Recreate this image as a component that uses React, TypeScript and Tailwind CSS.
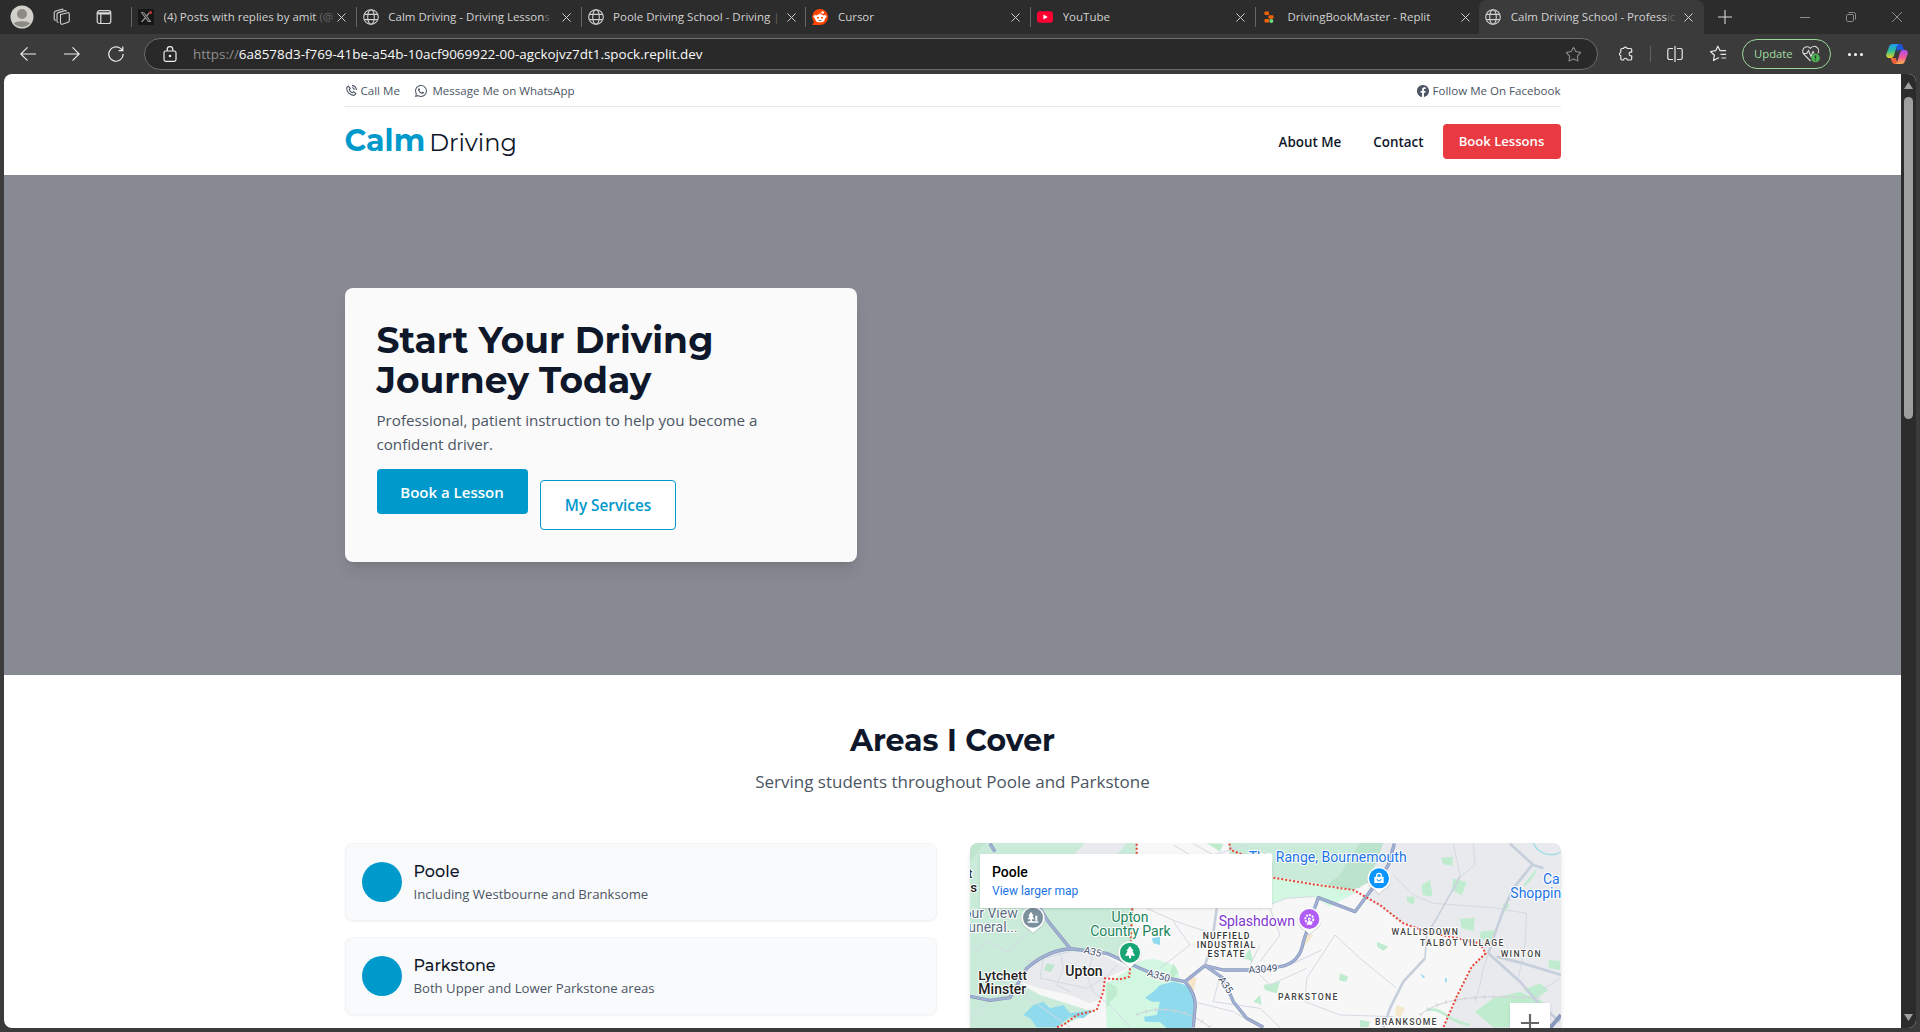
import type { ReactNode } from 'react';
import { BiPhoneCall } from 'react-icons/bi';
import { BsWhatsapp, BsFacebook } from 'react-icons/bs';
import { FaXTwitter } from 'react-icons/fa6';
import { Star } from 'lucide-react';

const Globe = () => (
  <svg viewBox="0 0 16 16" className="size-4" fill="none" stroke="#d0d0d0" strokeWidth="1.1">
    <circle cx="8" cy="8" r="7.3" />
    <ellipse cx="8" cy="8" rx="3.3" ry="7.3" />
    <path d="M1.4 5.4h13.2M1.4 10.6h13.2" />
  </svg>
);

const XFavicon = () => (
  <span className="relative flex size-4 items-center justify-center bg-[#171717]">
    <FaXTwitter className="size-3 text-[#9a9a9a]" />
    <span className="absolute top-0.5 right-0.5 size-[3px] rounded-full bg-[#c93434]" />
  </span>
);

const Reddit = () => (
  <svg viewBox="0 0 16 16" className="size-4">
    <path d="M8 0a8 8 0 1 1 0 16H1.2c-.7 0-1-.8-.5-1.2L2.3 13.3A8 8 0 0 1 8 0z" fill="#ff4500" />
    <circle cx="3" cy="7.6" r="1.5" fill="#fff" />
    <circle cx="13" cy="7.6" r="1.5" fill="#fff" />
    <ellipse cx="8" cy="9.3" rx="5.1" ry="4" fill="#fff" />
    <circle cx="10.8" cy="3.5" r="1.2" fill="#fff" />
    <path d="M8 5.6c0-1.5.6-2.2 2.2-2.2" fill="none" stroke="#fff" strokeWidth=".7" />
    <circle cx="6" cy="8.7" r="1" fill="#ff4500" />
    <circle cx="10" cy="8.7" r="1" fill="#ff4500" />
    <path d="M5.9 11.2c1.2.9 3 .9 4.2 0z" fill="#222" />
  </svg>
);

const YouTube = () => (
  <svg viewBox="0 0 16 16" className="size-4">
    <rect x="0" y="2.2" width="16" height="11.6" rx="3" fill="#ff0033" />
    <path d="M6.4 5.5v5L10.7 8z" fill="#fff" />
  </svg>
);

const Replit = () => (
  <svg viewBox="0 0 16 16" className="size-4" fill="#f26207">
    <rect x="2.5" y="2.5" width="4.500" height="3.500" rx=".8" />
    <rect x="6.500" y="6.300" width="5" height="3.500" rx=".8" />
    <rect x="2.500" y="10" width="4.500" height="3.500" rx=".8" />
    <circle cx="9.300" cy="12" r="2" fill="#6ee07a" />
  </svg>
);

const Close = () => (
  <svg viewBox="0 0 10 10" className="size-[9px] shrink-0" stroke="#cfcfcf" strokeWidth="1.1">
    <path d="M.5.5l9 9M9.5.5l-9 9" />
  </svg>
);

const tabs: { icon: ReactNode; title: string; fade?: string }[] = [
  { icon: <XFavicon />, title: '(4) Posts with replies by amit', fade: ' (@' },
  { icon: <Globe />, title: 'Calm Driving - Driving Lesson', fade: 's' },
  { icon: <Globe />, title: 'Poole Driving School - Driving', fade: ' |' },
  { icon: <Reddit />, title: 'Cursor' },
  { icon: <YouTube />, title: 'YouTube' },
  { icon: <Replit />, title: 'DrivingBookMaster - Replit' },
];

function TabTitle({ title, fade }: { title: string; fade?: string }) {
  return (
    <span className="w-[170px] overflow-hidden text-[11.5px] leading-4 whitespace-pre text-[#d2d2d2]">
      {title}
      {fade && <span className="text-[#666]">{fade}</span>}
    </span>
  );
}

function TabBar() {
  return (
    <div className="flex h-[34px] items-center bg-[#2c2c2c]">
      <div className="flex w-[131px] shrink-0 items-center pl-2.5">
        <svg viewBox="0 0 24 24" className="size-6">
          <circle cx="12" cy="12" r="11.5" fill="#d2d0ca" />
          <circle cx="12" cy="9" r="5" fill="#8c8a86" />
          <path d="M4 18.5C5 15.5 19 15.5 20 18.5a11 11 0 0 1-16 0z" fill="#8c8a86" />
        </svg>
        <svg viewBox="0 0 18 18" className="ml-[19px] size-[18px]" fill="none" stroke="#cfcfcf" strokeWidth="1.1" strokeLinejoin="round">
          <path d="M7.5 6.5l7.3-1.8a1.2 1.2 0 0 1 1.5 1.2v6.6a1.8 1.8 0 0 1-1.2 1.7l-5.8 2a1.4 1.4 0 0 1-1.8-1.3z" />
          <path d="M5.5 14.5l-.8-.3a1.4 1.4 0 0 1-.7-1.2V6.3A1.8 1.8 0 0 1 5.3 4.6l6.5-2a1.3 1.3 0 0 1 1.6.9" />
          <path d="M2.8 12.5l-.9-.4a1.3 1.3 0 0 1-.7-1.2V5a1.8 1.8 0 0 1 1.2-1.7L8.6 1.2a1.4 1.4 0 0 1 1.7.6" />
        </svg>
        <svg viewBox="0 0 16 16" className="ml-[25px] size-4" fill="none" stroke="#dadada" strokeWidth="1.2">
          <rect x="1.2" y="1.7" width="13.6" height="12.8" rx="2.2" />
          <path d="M1.5 3.8h13M1.5 4.8h13M4.8 5v9" />
        </svg>
      </div>
      {tabs.map((t) => (
        <div key={t.title} className="flex h-5 w-[224.8px] shrink-0 items-center border-l border-[#666] pl-1.5">
          <span className="mr-[9.5px] shrink-0">{t.icon}</span>
          <TabTitle title={t.title} fade={t.fade} />
          <span className="ml-[3.5px]"><Close /></span>
        </div>
      ))}
      <div className="-ml-px flex h-full w-[225px] shrink-0 items-center rounded-t-lg bg-[#3b3b3b] pl-[6.5px]">
        <span className="mr-[9.5px]"><Globe /></span>
        <TabTitle title="Calm Driving School - Profess" fade="ic" />
        <span className="ml-[3px]"><Close /></span>
      </div>
      <svg viewBox="0 0 14 14" className="ml-3.5 size-3.5 shrink-0" stroke="#d8d8d8" strokeWidth="1.1">
        <path d="M7 0v14M0 7h14" />
      </svg>
      <div className="ml-auto flex items-center gap-9 pr-[18px]">
        <svg viewBox="0 0 10 10" className="size-2.5" stroke="#8c8c8c"><path d="M0 5.5h10" /></svg>
        <svg viewBox="0 0 10 10" className="size-2.5" fill="none" stroke="#8c8c8c">
          <rect x=".5" y="2.5" width="7" height="7" rx="1.2" />
          <path d="M2.5.5h5a2 2 0 0 1 2 2v5" />
        </svg>
        <svg viewBox="0 0 10 10" className="size-2.5" stroke="#8c8c8c"><path d="M0 0l10 10M10 0L0 10" /></svg>
      </div>
    </div>
  );
}

function Toolbar() {
  return (
    <div className="flex h-10 items-center bg-[#3b3b3b]">
      <div className="flex w-[144px] shrink-0 items-center gap-7 pl-5">
        <svg viewBox="0 0 16 16" className="size-4" fill="none" stroke="#f0f0f0" strokeWidth="1.1"><path d="M16 8H.8M7.5 1.3L.8 8l6.7 6.7" /></svg>
        <svg viewBox="0 0 16 16" className="size-4" fill="none" stroke="#f0f0f0" strokeWidth="1.1"><path d="M0 8h15.2M8.5 1.3L15.2 8l-6.7 6.7" /></svg>
        <svg viewBox="0 0 16 16" className="size-4" fill="none" stroke="#f0f0f0" strokeWidth="1.2">
          <path d="M15.2 8A7.2 7.2 0 1 1 12.5 2.4L14.6 4.3M14.8.4v4.2h-4.2" />
        </svg>
      </div>
      <div className="flex h-8 w-[1454px] shrink-0 items-center rounded-full border border-[#6c6c6c] bg-[#292929] pr-[15px] pl-[18px]">
        <svg viewBox="0 0 14 16" className="h-4 w-3.5" fill="none" stroke="#eee" strokeWidth="1.2">
          <rect x="1" y="5" width="12" height="10.3" rx="1.8" />
          <path d="M4.2 5V3.5a2.8 2.8 0 0 1 5.6 0V5" />
          <circle cx="7" cy="10" r=".7" fill="#eee" />
        </svg>
        <p className="ml-4 text-[13.44px] leading-5 text-[#fafafa]"><span className="text-[#8f8f8f]">https://</span>6a8578d3-f769-41be-a54b-10acf9069922-00-agckojvz7dt1.spock.replit.dev</p>
        <Star className="ml-auto size-[17px] text-[#8f8f8f]" strokeWidth={1.5} />
      </div>
      <svg viewBox="0 0 16 16" className="ml-5 size-4 shrink-0" fill="none" stroke="#e8e8e8" strokeWidth="1.2" strokeLinejoin="round">
        <path d="M5.5 2.5a1.9 1.9 0 0 1 3.7 0h3.3a1.2 1.2 0 0 1 1.2 1.2v2.5h-.8a1.8 1.8 0 0 0 0 3.6h.8v3a1.2 1.2 0 0 1-1.2 1.2H9.3v-.3a1.9 1.9 0 0 0-3.7 0v.3H4a1.2 1.2 0 0 1-1.2-1.2V9.8a1.9 1.9 0 0 1 0-3.6V3.7A1.2 1.2 0 0 1 4 2.5z" />
      </svg>
      <div className="ml-4 h-4 w-px bg-[#626262]" />
      <svg viewBox="0 0 16 16" className="ml-4 size-4 shrink-0" fill="none" stroke="#e8e8e8" strokeWidth="1.2">
        <path d="M6 2.5H2.5A1.7 1.7 0 0 0 .8 4.2v7.6a1.7 1.7 0 0 0 1.7 1.7H6M10 2.5h3.5a1.7 1.7 0 0 1 1.7 1.7v7.6a1.7 1.7 0 0 1-1.7 1.7H10M8 0v16" />
      </svg>
      <svg viewBox="0 0 18 18" className="ml-[26px] size-[18px] shrink-0" fill="none" stroke="#e8e8e8" strokeWidth="1.2" strokeLinejoin="round">
        <path d="M10 12.5l-5.5 3 .9-5.3L1.5 6.5l5.2-.8L8.8 1.2l2.3 4.5h6M11.500 9.4h5.6M12.5 13h4.6" />
      </svg>
      <div className="ml-[15px] flex h-[30px] w-[89px] shrink-0 items-center justify-between rounded-full border border-[#9bd69b] pr-2.5 pl-[11px]">
        <span className="text-[11.3px] text-[#a0dca0]">Update</span>
        <svg viewBox="0 0 18 18" className="size-[18px]" fill="none" stroke="#d9d9d9" strokeWidth="1.1">
          <path d="M8.5 16L1.8 9.2A4.1 4.1 0 0 1 8.5 3.3a4.1 4.1 0 0 1 7.3 5.2" />
          <path d="M1 8.5h3.8L6.5 5.5l2.5 6 2-5 1.2 2" />
          <circle cx="13.5" cy="13" r="4.3" fill="#4caf50" stroke="none" />
          <path d="M13.5 10.5v3M13.5 14.5v1" stroke="#1f3a20" strokeWidth="1.3" />
        </svg>
      </div>
      <div className="ml-[17px] flex gap-[3px]">
        <i className="size-[3px] rounded-full bg-white" />
        <i className="size-[3px] rounded-full bg-white" />
        <i className="size-[3px] rounded-full bg-white" />
      </div>
      <svg viewBox="0 0 22 20" className="ml-[23px] h-5 w-[22px] shrink-0">
        <defs>
          <linearGradient id="cpA" x1="0" y1="0" x2="0" y2="1"><stop offset="0" stopColor="#1e9bf0" /><stop offset=".5" stopColor="#2fbf9a" /><stop offset="1" stopColor="#f2d21b" /></linearGradient>
          <linearGradient id="cpB" x1="0" y1="0" x2="0" y2="1"><stop offset="0" stopColor="#a84ff0" /><stop offset=".5" stopColor="#f0569a" /><stop offset="1" stopColor="#ffb04a" /></linearGradient>
        </defs>
        <path d="M10 0h4a3 3 0 0 1 2.8 2.2L18 6h-4a3 3 0 0 0-3 2z" fill="#1f55d8" />
        <path d="M6.5 14L4.5 14 6 18a3 3 0 0 0 2.8 2h3l-2-6z" fill="#f0603a" />
        <path d="M7 0h6.500a3 3 0 0 0-2.8 2.3L7.8 12a3 3 0 0 1-2.8 2H3C.8 14-.2 12.3.3 10L3 3A4 4 0 0 1 7 0z" fill="url(#cpA)" />
        <path d="M15 20H8.5a3 3 0 0 0 2.8-2.3L14.2 8A3 3 0 0 1 17 6h2c2.2 0 3.2 1.7 2.7 4L19 17a4 4 0 0 1-4 3z" fill="url(#cpB)" />
      </svg>
    </div>
  );
}

function Header() {
  return (
    <header className="h-[101px] pt-px">
      <div className="mx-auto w-[1216px]">
        <div className="flex h-8 items-center border-b border-[#e5e7eb] text-[11.55px] text-[#4b5563]">
          <BiPhoneCall className="mr-[3px] size-[13px]" />
          <span>Call Me</span>
          <BsWhatsapp className="mr-[5px] ml-[15.5px] size-3" />
          <span>Message Me on WhatsApp</span>
          <BsFacebook className="mr-1 ml-auto size-3" />
          <span>Follow Me On Facebook</span>
        </div>
        <div className="flex h-[68px] items-center">
          <div className="flex items-baseline gap-1 pb-0.5 font-[Montserrat,Inter,sans-serif]">
            <span className="text-[30px] font-bold text-[#0099cc]">Calm</span>
            <span className="text-2xl text-[#0f172a]">Driving</span>
          </div>
          <nav className="ml-auto flex items-center text-[13.4px] font-semibold text-[#0f172a]">
            <span className="mr-8 pt-[3px]">About Me</span>
            <span className="mr-[19px] pt-[3px]">Contact</span>
            <button className="h-[35px] w-[118px] rounded bg-[#e93a41] pt-0.5 text-[13.1px] text-white">Book Lessons</button>
          </nav>
        </div>
      </div>
    </header>
  );
}

function Hero() {
  return (
    <section className="flex h-[500px] items-center bg-[#888a93]">
      <div className="mx-auto w-[1216px]">
        <div className="h-[274px] w-[512px] rounded-lg bg-[#fafafa] p-8 shadow-lg">
          <h1 className="font-[Montserrat,Inter,sans-serif] text-4xl leading-10 font-bold text-[#0f172a]">Start Your Driving<br />Journey Today</h1>
          <p className="mt-2 text-[15.15px] leading-6 text-[#4b5563]">Professional, patient instruction to help you become a<br />confident driver.</p>
          <div className="mt-[13px] flex gap-3">
            <button className="h-[45px] w-[151px] rounded bg-[#0099cc] pt-0.5 text-[15px] font-semibold text-white">Book a Lesson</button>
            <button className="mt-[11px] h-[50px] w-[136px] rounded border border-[#0099cc] bg-white pl-px text-[15.3px] font-semibold text-[#0099cc]">My Services</button>
          </div>
        </div>
      </div>
    </section>
  );
}

const LAND = '#f7f7f7';
const URBAN = '#e8eaed';
const FOREST = '#caebd9';
const PARK = '#d3f8e2';
const WATER = '#90daee';

const minorRoads = [
  'M40 350 90 320 140 350 200 300 220 240', 'M30 120 100 90 180 60', 'M90 420 150 450 250 520 330 577',
  'M30 560 80 500 120 495', 'M200 380 250 370 330 350', 'M300 345 310 400 290 450 330 470', 'M250 370 240 430 290 440 380 460 430 430',
  'M400 360 380 420 400 470 460 520 510 577', 'M470 390 430 440', 'M640 30 690 60', 'M700 26 760 60 860 30',
  'M560 220 650 260 740 290', 'M600 400 690 330 640 260', 'M900 330 870 390 930 450 1040 400', 'M780 420 760 500 900 520 960 577',
  'M900 220 980 190 1060 185', 'M930 220 960 300 900 380', 'M1125 300 1200 370 1310 460', 'M1125 300 1040 430 1035 500 1140 540 1300 545',
  'M1000 385 1085 345', 'M1300 120 1360 180 1420 205 1600 218 1700 235', 'M1480 26 1500 120 1480 170', 'M1590 340 1570 400 1560 450 1545 500',
  'M1700 235 1695 330 1675 430', 'M1540 26 1545 90 1500 125', 'M1800 430 1740 470 1725 490', 'M700 500 820 530 900 577',
];
const midRoads = ['M1650 26 1720 90 1750 100', 'M1720 85 1660 160 1630 225 1600 310 1585 355', 'M1585 355 1680 440 1740 510 1800 560', 'M1610 365 1690 385 1803 420', 'M770 220 755 330 735 390', 'M1395 370 1330 440 1290 520 1270 577'];
const thinRoads = ['M1500 125 1430 250 1400 300 1395 370'];
const mainRoads = ['M30 484 90 496 150 488 200 400 Q270 340 340 342 L440 355 540 400 600 425 675 440 735 392', 'M240 220 265 260 330 340', 'M90 26 105 50', 'M735 392 790 405 900 405 960 395 Q1020 385 1030 320 L1060 230 1075 188 1185 230 1260 130 1285 90 1303 26', 'M735 392 790 430 820 500 860 550 910 577', 'M675 440 Q710 480 705 520 L700 577'];
const borders = ['M530 26V60M517 220 512 320', 'M510 400 508 425 480 433 435 430 430 470 410 525 350 540 310 570 290 577', 'M808 26 812 45 850 60', 'M940 128 1060 148 1180 165 1260 210 1330 265 1400 290 1560 325 1577 355 1535 395 1490 485 1450 577'];

function MapLabel({ x, y, size, fill, children, anchor = 'middle', weight = 400, spacing = 0, width, transform }: {
  x: number; y: number; size: number; fill: string; children: string; anchor?: 'start' | 'middle' | 'end'; weight?: number; spacing?: number; width?: number; transform?: string;
}) {
  return (
    <text x={x} y={y} fontSize={size} fill={fill} textAnchor={anchor} fontWeight={weight} letterSpacing={spacing} textLength={width} transform={transform} stroke="#ffffff" strokeWidth="6" strokeLinejoin="round" paintOrder="stroke">
      {children}
    </text>
  );
}

function Pin({ x, y, fill, children }: { x: number; y: number; fill: string; children: ReactNode }) {
  return (
    <g transform={`translate(${x} ${y})`}>
      <path d="M0 47 L-14 33 A36 36 0 1 1 14 33 Z" fill="#00000022" transform="translate(0 3)" />
      <path d="M0 46 L-14 33 A35 35 0 1 1 14 33 Z" fill="#fff" />
      <circle r="30" fill={fill} />
      {children}
    </g>
  );
}

const hoods = { size: 26, weight: 500 };

function AreaMap() {
  return (
    <div className="relative h-[185px] w-[591px] overflow-hidden rounded-t-lg font-[Roboto,sans-serif] shadow-md">
      <svg viewBox="30 24 1773 555" className="block h-[185px] w-[591px]">
        <rect x="30" y="24" width="1773" height="555" fill={LAND} />
        <path d="M30 24H530L512 395 480 380 440 355 330 350 250 360 170 440 240 480 400 530 290 579H30Z" fill={FOREST} />
        <path d="M375 24H500L470 60H340Z" fill={URBAN} />
        <path d="M250 360 330 348 430 360 505 400 435 430 425 490 390 505 330 480 240 460 180 440 200 400Z" fill={URBAN} />
        <path d="M260 385 285 390 272 412 252 405Z" fill="#bfe5cf" />
        <path d="M30 24H75L30 80Z" fill="#bfe5cf" />
        <path d="M510 400 Q540 370 580 372 L630 385 655 410 660 440 700 470 640 579H440L435 450Z" fill={PARK} />
        <path d="M450 500 Q480 480 470 455 L440 440 440 520ZM640 385 655 410 640 430 625 425Z" fill="#bfeccf" />
        <path d="M600 450 640 440 695 455 703 500 695 579H620L600 562 555 560 552 545 590 540 600 500 575 500 555 488 580 470Z" fill={WATER} />
        <path d="M190 540 220 510 250 500 270 520 310 510 330 535 400 525 370 550 330 545 290 577H230L210 550Z" fill={WATER} />
        <path d="M575 310 600 305 600 330 580 325Z" fill={WATER} />
        <path d="M685 420 710 430 700 470 685 450Z" fill="#f6e5c6" />
        <path d="M805 24H1250L1230 100 1200 160 1100 150 940 125 810 70Z" fill={FOREST} />
        <path d="M1200 75 1260 60 1230 140 1180 165 1100 150Z" fill="#bce3cc" />
        <path d="M930 125 1100 152 1190 170 1110 215 1060 185 980 190 930 210Z" fill={PARK} />
        <path d="M1240 24H1803V579H1450L1490 485 1535 395 1577 355 1560 325 1400 290 1330 265 1215 185 1240 130Z" fill={URBAN} />
        <path d="M1200 24H1270L1230 130 1180 165 1120 150Z" fill="#bce3cc" />
        <g fill="#bfeccf">
          <path d="M1443 68 1478 66 1478 92 1450 88ZM1385 150 1410 135 1418 185 1388 180ZM1480 130 1520 142 1505 180 1475 165ZM1340 185 1365 185 1360 210 1342 200ZM1500 252 1545 248 1540 288 1505 280ZM1562 290 1610 285 1590 320 1560 310ZM1250 320 1285 335 1270 348 1252 335ZM1140 415 1165 425 1158 440 1137 436ZM910 450 960 440 950 475 915 465ZM1200 555 1230 560 1225 577H1200ZM1765 375 1800 378V405L1767 400ZM740 24 790 26 780 50ZM870 340 880 380 850 370Z" />
          <path d="M1545 530 1600 490 1680 470 1750 500V577H1600ZM1690 465 1740 445 1765 465 1730 490ZM1690 150 1730 100 1725 120 1695 155ZM1630 205 1650 210 1630 235ZM880 500 900 480 905 510Z" />
        </g>
        <path d="M1310 510 1335 520 1320 550 1305 540ZM1030 300 1060 300 1020 350Z" fill="#f6e8cd" />
        <path d="M1380 415 1395 425 1390 430ZM1455 430H1460V442H1455Z" fill={WATER} />
        <path d="M1720 24C1740 70 1790 60 1803 50" fill="none" stroke="#9fdde6" strokeWidth="4" />
        <path d="M1400 525C1450 515 1460 560 1530 570" fill="none" stroke="#bfeccf" strokeWidth="8" />
        <g fill="none" stroke="#d3dae3" strokeWidth="3">{minorRoads.map((d) => <path key={d} d={d} />)}</g>
        <g fill="none" stroke="#cfd2d8" strokeWidth="3">
          <path d="M530 540C590 510 680 520 750 577M1380 540C1450 480 1600 480 1740 490" />
          <path d="M530 540C590 510 680 520 750 577M1380 540C1450 480 1600 480 1740 490" strokeWidth="12" strokeDasharray="3 26" />
        </g>
        <g fill="none" stroke="#c9d2dc" strokeWidth="5" strokeLinejoin="round">{thinRoads.map((d) => <path key={d} d={d} />)}</g>
        <g fill="none" stroke="#c6cfdb" strokeWidth="8" strokeLinejoin="round">{midRoads.map((d) => <path key={d} d={d} />)}</g>
        <g fill="none" stroke="#8798bd" strokeWidth="10" strokeLinejoin="round">{mainRoads.map((d) => <path key={d} d={d} />)}</g>
        <g fill="none" stroke="#a3b2d3" strokeWidth="6" strokeLinejoin="round">{mainRoads.map((d) => <path key={d} d={d} />)}</g>
        <path d="M1770 579 1803 540" stroke="#8798bd" strokeWidth="12" />
        <g fill="none" stroke="#ea4335" strokeWidth="6" strokeDasharray="6 6">{borders.map((d) => <path key={d} d={d} />)}</g>

        <MapLabel x={24} y={128} size={40} fill="#333" anchor="start" weight={500}>t</MapLabel>
        <MapLabel x={31} y={170} size={40} fill="#222" anchor="start" weight={500}>s</MapLabel>
        <MapLabel x={173} y={249} size={42} fill="#5b7083" anchor="end">our View</MapLabel>
        <MapLabel x={173} y={290} size={42} fill="#5b7083" anchor="end">uneral...</MapLabel>
        <MapLabel x={510} y={261} size={42} fill="#188459">Upton</MapLabel>
        <MapLabel x={511} y={303} size={42} fill="#188459">Country Park</MapLabel>
        <MapLabel x={372} y={422} size={42} fill="#222" weight={500}>Upton</MapLabel>
        <MapLabel x={128} y={434} size={41} fill="#222" weight={500}>Lytchett</MapLabel>
        <MapLabel x={127} y={476} size={42} fill="#222" weight={500}>Minster</MapLabel>
        <MapLabel x={776} y={273} size={42} fill="#8035d0" anchor="start">Splashdown</MapLabel>
        <MapLabel x={798} y={313} {...hoods} fill="#333" width={140}>NUFFIELD</MapLabel>
        <MapLabel x={798} y={340} {...hoods} fill="#333" width={175}>INDUSTRIAL</MapLabel>
        <MapLabel x={798} y={367} {...hoods} fill="#333" width={111}>ESTATE</MapLabel>
        <MapLabel x={1340} y={80} size={42} fill="#1a73e8" anchor="end" spacing={0.13}>The Range, Bournemouth</MapLabel>
        <MapLabel x={1749} y={146} size={42} fill="#1a73e8" anchor="start">Ca</MapLabel>
        <MapLabel x={1651} y={188} size={42} fill="#1a73e8" anchor="start">Shoppin</MapLabel>
        <MapLabel x={1394} y={299} {...hoods} fill="#444" width={199}>WALLISDOWN</MapLabel>
        <MapLabel x={1505} y={332} {...hoods} fill="#444" width={250}>TALBOT VILLAGE</MapLabel>
        <MapLabel x={1682} y={366} {...hoods} fill="#444" width={120}>WINTON</MapLabel>
        <MapLabel x={1043} y={495} {...hoods} fill="#444" width={178}>PARKSTONE</MapLabel>
        <MapLabel x={1337} y={569} {...hoods} fill="#444" width={184}>BRANKSOME</MapLabel>
        <MapLabel x={398} y={360} size={30} fill="#3c4a66" transform="rotate(13 398 350)">A35</MapLabel>
        <MapLabel x={596} y={432} size={30} fill="#3c4a66" transform="rotate(16 596 421)">A350</MapLabel>
        <MapLabel x={797} y={460} size={30} fill="#3c4a66" transform="rotate(56 797 450)">A35</MapLabel>
        <MapLabel x={909} y={412} size={30} fill="#3c4a66" transform="rotate(-4 909 402)">A3049</MapLabel>

        <Pin x={219} y={248} fill="#7a909c">
          <path d="M-6-18-14-5h4l-6 10h20l-6-10h4zM-8 5h5v6h-5zM7-6h6V9H7zM-16 11H16v4H-16z" fill="#fff" />
        </Pin>
        <Pin x={510} y={353} fill="#17a673">
          <path d="M0-20-11-5h4l-8 14H-3V17H3V9H15L7-5h4z" fill="#fff" />
        </Pin>
        <Pin x={1048} y={252} fill="#b15cf5">
          <circle r="12" fill="none" stroke="#fff" strokeWidth="6" strokeDasharray="6 3" />
          <path d="M0 0-9 17H9ZM-4-4H4V4H-4Z" fill="#fff" />
        </Pin>
        <Pin x={1257} y={130} fill="#0a95ff">
          <path d="M-14-5H14V14H-14Z" fill="#fff" />
          <path d="M-7-4v-4a7 7 0 0 1 14 0v4" fill="none" stroke="#fff" strokeWidth="4" />
          <path d="M-6 2a6 6 0 0 0 12 0" fill="none" stroke="#0a95ff" strokeWidth="3" />
        </Pin>
      </svg>
      <div className="absolute top-[11px] left-2.5 h-[54px] w-[292px] rounded-[1px] bg-white pt-2.5 pl-[12.5px] shadow">
        <p className="text-sm leading-4 font-medium text-black">Poole</p>
        <p className="mt-[3px] text-xs leading-4 text-[#1a73e8]">View larger map</p>
      </div>
      <div className="absolute top-[160px] right-[11px] flex h-10 w-10 items-center justify-center bg-white shadow">
        <svg viewBox="0 0 18 18" className="size-[18px]" stroke="#666" strokeWidth="2.2"><path d="M9 0v18M0 9h18" /></svg>
      </div>
    </div>
  );
}

const areas = [
  { name: 'Poole', detail: 'Including Westbourne and Branksome' },
  { name: 'Parkstone', detail: 'Both Upper and Lower Parkstone areas' },
];

function Areas() {
  return (
    <section className="flex flex-col items-center pt-12">
      <h2 className="font-[Montserrat,Inter,sans-serif] text-[30px] leading-9 font-bold text-[#0f172a]">Areas I Cover</h2>
      <p className="mt-[9px] text-[17px] leading-7 text-[#4b5563]">Serving students throughout Poole and Parkstone</p>
      <div className="mt-[47px] flex w-[1216px] justify-between">
        <div className="flex w-[592px] flex-col gap-4">
          {areas.map((a) => (
            <div key={a.name} className="flex h-[78px] items-center rounded-lg border border-[#f3f4f6] bg-[#f9fafc] pl-4 shadow-xs">
              <span className="mr-3 size-10 rounded-full bg-[#0099cc]" />
              <div>
                <h3 className="font-[Montserrat,Inter,sans-serif] text-base leading-6 font-medium text-[#0f172a]">{a.name}</h3>
                <p className="text-[13.15px] leading-5 text-[#4b5563]">{a.detail}</p>
              </div>
            </div>
          ))}
        </div>
        <AreaMap />
      </div>
    </section>
  );
}

function Scrollbar() {
  return (
    <div className="flex w-[15px] shrink-0 flex-col items-center bg-[#2c2c2c]">
      <svg viewBox="0 0 9 7" className="mt-2 h-[7px] w-[9px]"><path d="M4.5 0 9 7H0z" fill="#9f9f9f" /></svg>
      <div className="mt-2 h-[322px] w-[9px] rounded-full bg-[#9f9f9f]" />
      <svg viewBox="0 0 9 7" className="mt-auto mb-[7px] h-[7px] w-[9px]"><path d="M4.5 7 9 0H0z" fill="#9f9f9f" /></svg>
    </div>
  );
}

export default function App() {
  return (
    <div className="h-[1032px] w-[1920px] overflow-hidden bg-[#3b3b3b] font-['Open_Sans',sans-serif]">
      <TabBar />
      <Toolbar />
      <div className="ml-1 flex h-[954px] w-[1912px] overflow-hidden rounded-lg bg-white">
        <main className="w-[1897px]">
          <Header />
          <Hero />
          <Areas />
        </main>
        <Scrollbar />
      </div>
    </div>
  );
}
